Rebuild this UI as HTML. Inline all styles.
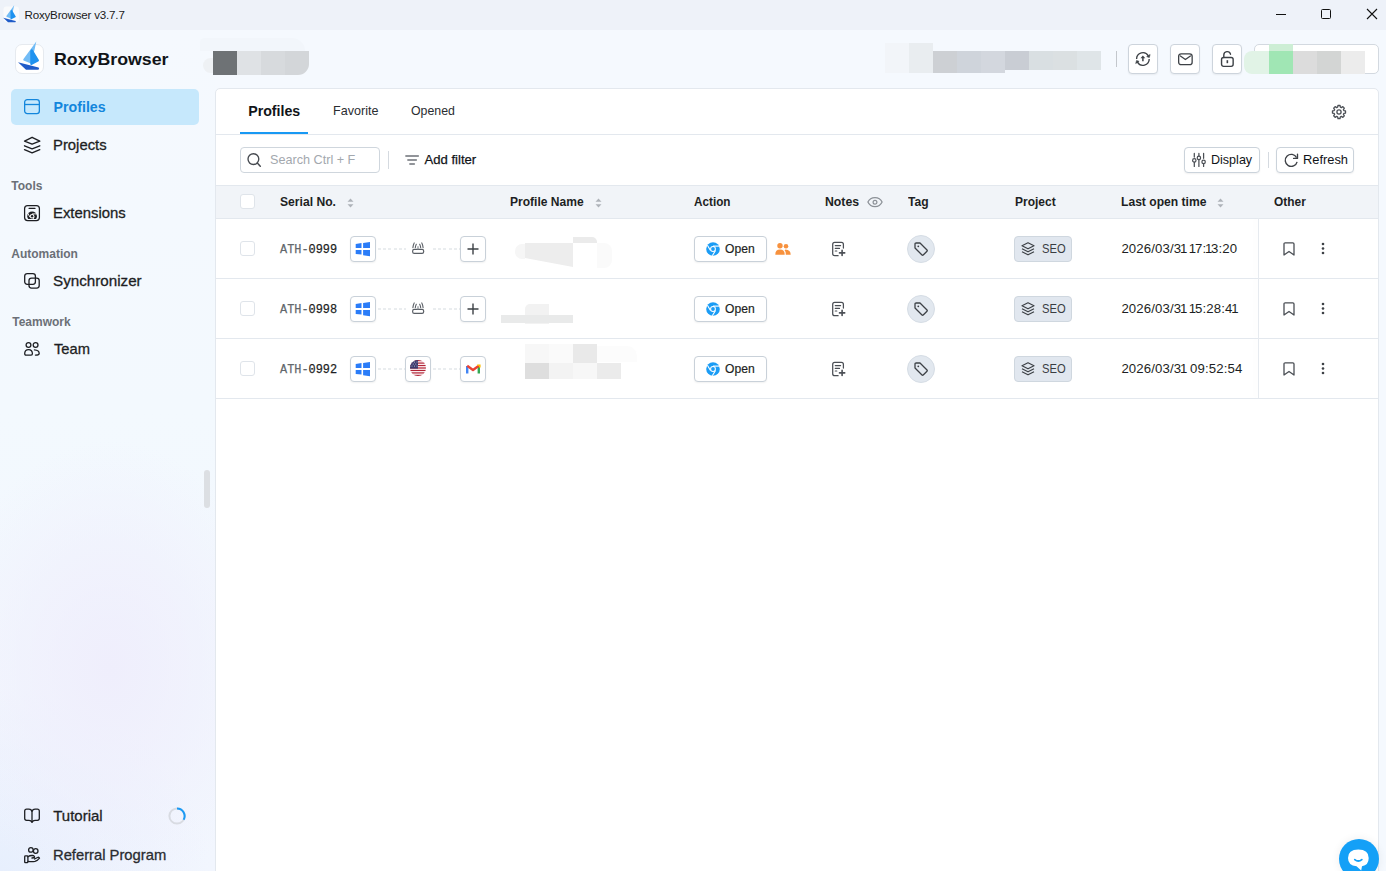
<!DOCTYPE html>
<html><head><meta charset="utf-8">
<style>
*{margin:0;padding:0;box-sizing:border-box}
html,body{width:1386px;height:871px;overflow:hidden;background:#f5f9fe;font-family:"Liberation Sans",sans-serif;color:#1d1f23}
.a{position:absolute}
.t{position:absolute;white-space:pre;line-height:1}
svg{position:absolute;overflow:visible}
.btn{position:absolute;background:#fff;border:1px solid #cbd3db;border-radius:4px;box-shadow:0 1px 2px rgba(0,0,0,.06)}
.cb{position:absolute;width:15px;height:15px;border:1px solid #dfe4ea;border-radius:3px;background:#fff}
</style></head><body>
<div class="a" style="left:0px;top:0px;width:1386px;height:30px;background:#eef2f9"></div>
<svg style="left:3px;top:5px" width="17" height="18" viewBox="0 0 17 18"><rect x="0.5" y="1.5" width="15.5" height="15.5" rx="3" fill="#f9fafc"/><g transform="translate(-1.6,-0.6) scale(0.6)"><path d="M21.3 1.5 L8.3 19.2 Q7.8 20.3 9.2 20.8 L16 23.5 L19.6 9.5 Z" fill="#72bcf6"/><path d="M15.2 11 Q16.3 8.2 18 10.2 L23.9 20.1 Q24.3 21.1 23.2 21.6 L16.6 24.9 Q15.5 25.3 15.3 24 Z" fill="#1f92ef"/><path d="M3 22.3 L23.6 27.6 Q25 29.7 22.7 29.7 L11 29.7 Z" fill="#1f5bc8"/></g></svg>
<div class="t" style="left:24.5px;top:8px;font:normal 11.6px 'Liberation Sans';color:#1a1a1a;letter-spacing:-0.2px">RoxyBrowser v3.7.7</div>
<div class="a" style="left:1276px;top:14px;width:10px;height:1px;background:#111"></div>
<div class="a" style="left:1321px;top:9px;width:10px;height:10px;border:1px solid #111;border-radius:1.5px"></div>
<svg style="left:1367px;top:9px" width="10" height="10" viewBox="0 0 10 10"><path d="M0 0 L10 10 M10 0 L0 10" stroke="#111" stroke-width="1.1"/></svg>
<div class="a" style="left:0px;top:30px;width:215px;height:841px;background:radial-gradient(ellipse 170px 230px at 110px 640px,#efeefc 0%,rgba(239,238,252,0.6) 45%,rgba(239,238,252,0) 100%),radial-gradient(ellipse 210px 180px at 0px 841px,#e7effd 0%,rgba(231,239,253,0) 100%),linear-gradient(180deg,#f5f9fe 0%,#f3f9fe 45%,#f2f6fe 100%)"></div>
<div class="a" style="left:15px;top:44px;width:29px;height:30px;background:#fff;border:1px solid #e6eaef;border-radius:7px"></div>
<svg style="left:15px;top:40px" width="29" height="34" viewBox="0 0 29 34"><path d="M21.3 1.5 L8.3 19.2 Q7.8 20.3 9.2 20.8 L16 23.5 L19.6 9.5 Z" fill="#72bcf6"/><path d="M15.2 11 Q16.3 8.2 18 10.2 L23.9 20.1 Q24.3 21.1 23.2 21.6 L16.6 24.9 Q15.5 25.3 15.3 24 Z" fill="#1f92ef"/><path d="M3 22.3 L23.6 27.6 Q25 29.7 22.7 29.7 L11 29.7 Z" fill="#1f5bc8"/></svg>
<div class="t" style="left:53.7px;top:50px;font:bold 17px 'Liberation Sans';color:#111418;transform:scaleX(1.045);transform-origin:0 0">RoxyBrowser</div>
<div class="a" style="left:11px;top:89px;width:188px;height:36px;background:#c6e8fc;border-radius:5px"></div>
<svg style="left:24px;top:99px" width="16" height="16" viewBox="0 0 16 16"><rect x="0.65" y="0.65" width="14.7" height="13.9" rx="2.6" fill="none" stroke="#1386dc" stroke-width="1.3"/><path d="M0.65 5.5 H15.35" stroke="#1386dc" stroke-width="1.3"/></svg>
<div class="t" style="left:53.6px;top:99px;font:bold 14.2px 'Liberation Sans';color:#1386dc;">Profiles</div>
<svg style="left:23px;top:136px" width="18" height="18" viewBox="0 0 18 18"><path d="M9.1 1.3 L16.8 5.1 L9.1 8.1 L1.5 5.1 Z" fill="none" stroke="#1d1f23" stroke-width="1.35" stroke-linejoin="round"/><path d="M1.5 9.8 L9.1 12.9 L16.8 9.8 M1.5 13.7 L9.1 16.8 L16.8 13.7" fill="none" stroke="#1d1f23" stroke-width="1.35" stroke-linejoin="round" stroke-linecap="round"/></svg>
<div class="t" style="left:53.1px;top:136px;font:normal 15px 'Liberation Sans';color:#1d1f23;-webkit-text-stroke:0.3px currentColor;transform:scaleX(0.989);transform-origin:0 0">Projects</div>
<div class="t" style="left:11.3px;top:179px;font:bold 12px 'Liberation Sans';color:#6b7077;">Tools</div>
<svg style="left:24px;top:205px" width="17" height="17" viewBox="0 0 17 17"><defs><clipPath id="ec"><rect x="1" y="1" width="14" height="13"/></clipPath></defs><rect x="0.6" y="0.6" width="14.8" height="14.9" rx="3" fill="none" stroke="#1d1f23" stroke-width="1.25"/><path d="M5.1 3.4 H11" stroke="#1d1f23" stroke-width="1.2" stroke-linecap="round"/><g clip-path="url(#ec)"><circle cx="8.1" cy="11.2" r="4.8" fill="#1d1f23"/><circle cx="8.1" cy="11.2" r="2.3" fill="#fff"/><circle cx="8.1" cy="11.2" r="1.2" fill="#1d1f23"/><path d="M8.1 8.9 H13 M6.1 12.3 L3.6 8 M10.1 12.3 L7.6 16.5" stroke="#fff" stroke-width="0.9"/></g></svg>
<div class="t" style="left:53.0px;top:204px;font:normal 15px 'Liberation Sans';color:#1d1f23;-webkit-text-stroke:0.3px currentColor;transform:scaleX(0.992);transform-origin:0 0">Extensions</div>
<div class="t" style="left:11.3px;top:247px;font:bold 12px 'Liberation Sans';color:#6b7077;">Automation</div>
<svg style="left:24px;top:272px" width="17" height="18" viewBox="0 0 17 18"><rect x="0.7" y="1.6" width="10.7" height="10.7" rx="2.5" fill="none" stroke="#1d1f23" stroke-width="1.3"/><rect x="5" y="6.1" width="10.2" height="10" rx="2.5" fill="none" stroke="#1d1f23" stroke-width="1.3"/></svg>
<div class="t" style="left:53.0px;top:272px;font:normal 15px 'Liberation Sans';color:#1d1f23;-webkit-text-stroke:0.3px currentColor;transform:scaleX(1.013);transform-origin:0 0">Synchronizer</div>
<div class="t" style="left:12.2px;top:315px;font:bold 12px 'Liberation Sans';color:#6b7077;">Teamwork</div>
<svg style="left:24px;top:342px" width="16" height="15" viewBox="0 0 16 15"><circle cx="4.5" cy="3" r="2.4" fill="none" stroke="#1d1f23" stroke-width="1.3"/><circle cx="11.6" cy="3" r="2.4" fill="none" stroke="#1d1f23" stroke-width="1.3"/><path d="M0.7 11.8 Q0.7 7.7 4.6 7.7 Q8.4 7.7 8.4 11.8 Q8.4 13.1 7.1 13.1 H2 Q0.7 13.1 0.7 11.8 Z" fill="none" stroke="#1d1f23" stroke-width="1.3"/><path d="M10.4 7.9 Q15.2 8.2 15.2 11.4 Q15.2 13.1 11.4 13.1" fill="none" stroke="#1d1f23" stroke-width="1.3" stroke-linecap="round"/></svg>
<div class="t" style="left:53.5px;top:340px;font:normal 15px 'Liberation Sans';color:#1d1f23;-webkit-text-stroke:0.3px currentColor;transform:scaleX(0.98);transform-origin:0 0">Team</div>
<div class="a" style="left:204px;top:470px;width:6px;height:38px;background:#dcdfe3;border-radius:3px"></div>
<svg style="left:24px;top:808px" width="16" height="16" viewBox="0 0 16 16"><path d="M8 3.2 Q7.2 1.2 5 1.2 H2.6 Q0.7 1.2 0.7 3 V10.5 Q0.7 12.3 2.6 12.3 H5 Q7.2 12.3 8 14.2 Q8.8 12.3 11 12.3 H13.4 Q15.3 12.3 15.3 10.5 V3 Q15.3 1.2 13.4 1.2 H11 Q8.8 1.2 8 3.2 Z" fill="none" stroke="#1d1f23" stroke-width="1.3" stroke-linejoin="round"/><path d="M8 3.2 V14.2" stroke="#1d1f23" stroke-width="1.3" stroke-linecap="round"/></svg>
<div class="t" style="left:53.2px;top:807px;font:normal 15px 'Liberation Sans';color:#1d1f23;-webkit-text-stroke:0.3px currentColor">Tutorial</div>
<svg style="left:168px;top:807px" width="18" height="18" viewBox="0 0 18 18"><circle cx="9" cy="9" r="7.6" fill="none" stroke="#d8dbe2" stroke-width="2"/><path d="M9 1.4 A7.6 7.6 0 0 1 15.6 12.8" fill="none" stroke="#1a9af5" stroke-width="2"/></svg>
<svg style="left:24px;top:847px" width="17" height="17" viewBox="0 0 17 17"><circle cx="6.9" cy="2.9" r="2.3" fill="none" stroke="#1d1f23" stroke-width="1.3"/><circle cx="11.7" cy="4" r="2.3" fill="none" stroke="#1d1f23" stroke-width="1.3"/><rect x="0.7" y="8.9" width="3.2" height="6.8" rx="0.8" fill="none" stroke="#1d1f23" stroke-width="1.3"/><path d="M3.9 9.8 Q6 8.3 8.5 8.5 Q10.8 8.8 10.5 10.5 L8 11 M3.9 14.4 Q8 15 11 14.4 Q13.5 13.8 15.5 11.2 Q15 9.8 13.5 10.5 L10.5 12" fill="none" stroke="#1d1f23" stroke-width="1.3" stroke-linejoin="round" stroke-linecap="round"/></svg>
<div class="t" style="left:53.2px;top:846px;font:normal 15px 'Liberation Sans';color:#2a2c30;-webkit-text-stroke:0.3px currentColor;transform:scaleX(0.984);transform-origin:0 0">Referral Program</div>
<div class="a" style="left:203px;top:58px;width:14px;height:15px;background:#eef1f4;border-radius:8px 0 0 8px"></div>
<div class="a" style="left:200px;top:38px;width:105px;height:13px;background:#f2f6fb;border-radius:10px 30px 0 0"></div>
<div class="a" style="left:213px;top:51px;width:24px;height:24px;background:#6e7275"></div>
<div class="a" style="left:237px;top:51px;width:24px;height:24px;background:#dfe2e5"></div>
<div class="a" style="left:261px;top:51px;width:24px;height:24px;background:#d7dadd"></div>
<div class="a" style="left:285px;top:51px;width:24px;height:24px;background:#d3d6d9;border-radius:0 0 11px 0"></div>
<div class="a" style="left:885px;top:43px;width:24px;height:30px;background:#f2f5f9"></div>
<div class="a" style="left:909px;top:43px;width:24px;height:30px;background:#e9edf0"></div>
<div class="a" style="left:933px;top:51px;width:24px;height:22px;background:#cdd0d4"></div>
<div class="a" style="left:957px;top:51px;width:24px;height:22px;background:#cfd4db"></div>
<div class="a" style="left:981px;top:51px;width:24px;height:22px;background:#d3d7de"></div>
<div class="a" style="left:1005px;top:51px;width:24px;height:19px;background:#c9cdd4"></div>
<div class="a" style="left:1029px;top:51px;width:24px;height:19px;background:#d9dfe2"></div>
<div class="a" style="left:1053px;top:51px;width:24px;height:19px;background:#dbe0e2"></div>
<div class="a" style="left:1077px;top:51px;width:24px;height:19px;background:#dfe5e8"></div>
<div class="a" style="left:1116px;top:51px;width:1px;height:16px;background:#c3c7cc"></div>
<div class="btn" style="left:1128px;top:44px;width:30px;height:30px;border-color:#cdd4dc"></div>
<div class="btn" style="left:1170px;top:44px;width:30px;height:30px;border-color:#cdd4dc"></div>
<div class="btn" style="left:1212px;top:44px;width:30px;height:30px;border-color:#cdd4dc"></div>
<svg style="left:1135px;top:51px" width="16" height="16" viewBox="0 0 16 16"><path d="M1.6 8 A6.3 6.3 0 0 1 13.36 4.85 M14.2 8 A6.3 6.3 0 0 1 2.44 11.15" fill="none" stroke="#3d4146" stroke-width="1.35"/><path d="M14.3 6.6 L15.1 3.5 L11.7 5.6 Z M1.6 9.4 L0.7 12.5 L4.1 10.4 Z" fill="#3d4146" stroke="#3d4146" stroke-width="0.6" stroke-linejoin="round"/><path d="M7.9 4.6 L10.3 7.3 H5.5 Z" fill="#3d4146"/><path d="M7.9 7 V10.3" stroke="#3d4146" stroke-width="1.5"/></svg>
<svg style="left:1177px;top:52px" width="16" height="14" viewBox="0 0 16 14"><rect x="1.65" y="1.85" width="13.5" height="10.8" rx="2.5" fill="none" stroke="#3d4146" stroke-width="1.3"/><path d="M3.4 4 L8.4 7.5 L13.4 4" fill="none" stroke="#3d4146" stroke-width="1.3" stroke-linecap="round" stroke-linejoin="round"/></svg>
<svg style="left:1220px;top:50px" width="15" height="17" viewBox="0 0 15 17"><path d="M3.8 7.5 V5 A3.4 3.4 0 0 1 10.5 4.2" fill="none" stroke="#3d4146" stroke-width="1.4" stroke-linecap="round"/><rect x="1.55" y="7.55" width="11.6" height="8.8" rx="2" fill="none" stroke="#3d4146" stroke-width="1.4"/><path d="M7.35 10.2 V13.2" stroke="#3d4146" stroke-width="1.6"/></svg>
<div class="a" style="left:1254px;top:44px;width:125px;height:30px;background:#fff;border:1px solid #d3d9e0;border-radius:5px"></div>
<div class="a" style="left:1244px;top:51px;width:25px;height:23px;background:#e1f3e6;border-radius:8px 0 0 8px"></div>
<div class="a" style="left:1269px;top:44px;width:24px;height:7px;background:#cdeed5"></div>
<div class="a" style="left:1269px;top:51px;width:24px;height:23px;background:#a0e6b4"></div>
<div class="a" style="left:1293px;top:51px;width:24px;height:23px;background:#dcdcdc"></div>
<div class="a" style="left:1317px;top:51px;width:24px;height:23px;background:#d3d5d4"></div>
<div class="a" style="left:1341px;top:51px;width:24px;height:23px;background:#ececec"></div>
<div class="a" style="left:215px;top:88px;width:1164px;height:800px;background:#fff;border:1px solid #e3e8ee;border-radius:5px"></div>
<div class="t" style="left:248.2px;top:103px;font:bold 14.2px 'Liberation Sans';color:#111418;">Profiles</div>
<div class="t" style="left:333.0px;top:103px;font:normal 13px 'Liberation Sans';color:#2a2d31;transform:scaleX(0.967);transform-origin:0 0">Favorite</div>
<div class="t" style="left:410.6px;top:103px;font:normal 13px 'Liberation Sans';color:#2a2d31;transform:scaleX(0.948);transform-origin:0 0">Opened</div>
<div class="a" style="left:240px;top:132px;width:68px;height:2px;background:#1899f4"></div>
<div class="a" style="left:216px;top:134px;width:1162px;height:1px;background:#e3e8ee"></div>
<svg style="left:1331px;top:104px" width="16" height="16" viewBox="0 0 16 16"><path d="M6.97 1.48 L9.03 1.48 L9.38 3.19 L10.42 3.63 L11.88 2.66 L13.34 4.12 L12.37 5.58 L12.81 6.62 L14.52 6.97 L14.52 9.03 L12.81 9.38 L12.37 10.42 L13.34 11.88 L11.88 13.34 L10.42 12.37 L9.38 12.81 L9.03 14.52 L6.97 14.52 L6.62 12.81 L5.58 12.37 L4.12 13.34 L2.66 11.88 L3.63 10.42 L3.19 9.38 L1.48 9.03 L1.48 6.97 L3.19 6.62 L3.63 5.58 L2.66 4.12 L4.12 2.66 L5.58 3.63 L6.62 3.19 Z" fill="none" stroke="#4b4f55" stroke-width="1.3" stroke-linejoin="round"/><circle cx="8" cy="8" r="2.1" fill="none" stroke="#4b4f55" stroke-width="1.3"/></svg>
<div class="btn" style="left:240px;top:147px;width:140px;height:26px;border-color:#cfd6dd;box-shadow:none"></div>
<svg style="left:247px;top:154px" width="14" height="14" viewBox="0 0 14 14"><circle cx="6.4" cy="5.1" r="5.4" fill="none" stroke="#464a50" stroke-width="1.35"/><path d="M10.3 9.1 L13.3 12.2" stroke="#464a50" stroke-width="1.5" stroke-linecap="round"/></svg>
<div class="t" style="left:269.6px;top:152px;font:normal 13px 'Liberation Sans';color:#a3a8ae;transform:scaleX(0.972);transform-origin:0 0">Search Ctrl + F</div>
<div class="a" style="left:388px;top:151px;width:1px;height:18px;background:#d5dae0"></div>
<svg style="left:405px;top:154px" width="14" height="11" viewBox="0 0 14 11"><path d="M0.9 2 H13.3 M2.9 6 H11.3 M4.9 10 H9.3" stroke="#6d7278" stroke-width="1.6" stroke-linecap="round"/></svg>
<div class="t" style="left:424.5px;top:152px;font:normal 13.1px 'Liberation Sans';color:#111418;-webkit-text-stroke:0.25px #111418">Add filter</div>
<div class="btn" style="left:1184px;top:147px;width:76px;height:26px"></div>
<svg style="left:1192px;top:153px" width="14" height="14" viewBox="0 0 14 14"><path d="M2.3 0.4 V4 M2.3 9.3 V13.4 M6.9 0.4 V3.1 M6.9 6.8 V13.4 M11.6 0.4 V5.3 M11.6 10.7 V13.4" stroke="#4b4f55" stroke-width="1.25" stroke-linecap="round"/><circle cx="2.3" cy="7.4" r="1.7" fill="none" stroke="#4b4f55" stroke-width="1.2"/><circle cx="6.9" cy="4.9" r="1.7" fill="none" stroke="#4b4f55" stroke-width="1.2"/><circle cx="11.6" cy="8.9" r="1.7" fill="none" stroke="#4b4f55" stroke-width="1.2"/></svg>
<div class="t" style="left:1210.8px;top:152px;font:normal 13px 'Liberation Sans';color:#111418;transform:scaleX(0.965);transform-origin:0 0">Display</div>
<div class="a" style="left:1268px;top:152px;width:1px;height:16px;background:#d5dae0"></div>
<div class="btn" style="left:1276px;top:147px;width:78px;height:26px"></div>
<svg style="left:1284px;top:153px" width="15" height="14" viewBox="0 0 15 14"><path d="M12.6 4.6 A6 6 0 1 0 13.1 8.8" fill="none" stroke="#3d4146" stroke-width="1.35"/><path d="M13.5 1.2 V5.4 H9.6" fill="none" stroke="#3d4146" stroke-width="1.35" stroke-linecap="round" stroke-linejoin="round"/></svg>
<div class="t" style="left:1303.2px;top:152px;font:normal 13px 'Liberation Sans';color:#111418;transform:scaleX(0.989);transform-origin:0 0">Refresh</div>
<div class="a" style="left:216px;top:185px;width:1162px;height:34px;background:#f1f4f8;border-top:1px solid #e3e8ee;border-bottom:1px solid #e3e8ee"></div>
<div class="cb" style="left:240px;top:194px"></div>
<div class="t" style="left:280.4px;top:195px;font:bold 12.5px 'Liberation Sans';color:#1d1f23;transform:scaleX(0.97);transform-origin:0 0">Serial No.</div>
<svg style="left:346.9px;top:198px" width="7" height="10" viewBox="0 0 7 10"><path d="M3.5 0.5 L6.5 3.8 H0.5 Z M3.5 9.5 L6.5 6.2 H0.5 Z" fill="#aeb3b9"/></svg>
<div class="t" style="left:510.3px;top:195px;font:bold 12.5px 'Liberation Sans';color:#1d1f23;transform:scaleX(0.963);transform-origin:0 0">Profile Name</div>
<svg style="left:594.9px;top:198px" width="7" height="10" viewBox="0 0 7 10"><path d="M3.5 0.5 L6.5 3.8 H0.5 Z M3.5 9.5 L6.5 6.2 H0.5 Z" fill="#aeb3b9"/></svg>
<div class="t" style="left:694.1px;top:195px;font:bold 12.5px 'Liberation Sans';color:#1d1f23;transform:scaleX(0.938);transform-origin:0 0">Action</div>
<div class="t" style="left:825.4px;top:195px;font:bold 12.5px 'Liberation Sans';color:#1d1f23;transform:scaleX(0.982);transform-origin:0 0">Notes</div>
<svg style="left:867px;top:196.6px" width="16" height="11" viewBox="0 0 16 11"><path d="M0.9 5.1 C2.5 1.6 5 0.6 8 0.6 C11 0.6 13.5 1.6 15.1 5.1 C13.5 8.6 11 9.7 8 9.7 C5 9.7 2.5 8.6 0.9 5.1 Z" fill="none" stroke="#8b9096" stroke-width="1.2"/><circle cx="8" cy="5.2" r="1.9" fill="none" stroke="#8b9096" stroke-width="1.2"/></svg>
<div class="t" style="left:907.9px;top:195px;font:bold 12.5px 'Liberation Sans';color:#1d1f23;transform:scaleX(0.967);transform-origin:0 0">Tag</div>
<div class="t" style="left:1014.5px;top:195px;font:bold 12.5px 'Liberation Sans';color:#1d1f23;transform:scaleX(0.96);transform-origin:0 0">Project</div>
<div class="t" style="left:1121.3px;top:195px;font:bold 12.5px 'Liberation Sans';color:#1d1f23;transform:scaleX(0.969);transform-origin:0 0">Last open time</div>
<svg style="left:1216.9px;top:198px" width="7" height="10" viewBox="0 0 7 10"><path d="M3.5 0.5 L6.5 3.8 H0.5 Z M3.5 9.5 L6.5 6.2 H0.5 Z" fill="#aeb3b9"/></svg>
<div class="t" style="left:1274.3px;top:195px;font:bold 12.5px 'Liberation Sans';color:#1d1f23;transform:scaleX(0.953);transform-origin:0 0">Other</div>
<div class="a" style="left:216px;top:278px;width:1162px;height:1px;background:#e3e8ee"></div>
<div class="cb" style="left:240px;top:241px"></div>
<div class="t" style="left:280.2px;top:242px;font:normal 13.6px 'Liberation Mono';color:#1d1f23;transform:scaleX(0.875);transform-origin:0 0;-webkit-text-stroke:0.25px currentColor"><span style="color:#62676c">ATH-</span>0999</div>
<div class="btn" style="left:350px;top:236px;width:26px;height:26px;border-color:#c9d1d9"></div>
<svg style="left:355px;top:241px" width="16" height="16" viewBox="0 0 16 16"><path d="M0.7 3 L6.5 2.1 V6.9 H0.7 Z M8.1 1.9 L15 1 V6.9 H8.1 Z M0.7 9 H6.5 V13.6 L0.7 12.9 Z M8.1 9 H15 V15.3 L8.1 14.2 Z" fill="#2a7cf8"/></svg>
<div class="a" style="left:378px;top:248px;width:28px;height:2px;background:repeating-linear-gradient(90deg,#dce1e5 0 3px,transparent 3px 5.2px);transform:scaleY(0.6)"></div>
<div class="a" style="left:433px;top:248px;width:27px;height:2px;background:repeating-linear-gradient(90deg,#dce1e5 0 3px,transparent 3px 5.2px);transform:scaleY(0.6)"></div>
<svg style="left:412px;top:242px" width="12" height="12" viewBox="0 0 12 12"><rect x="0.65" y="7.4" width="11" height="4" rx="1.6" fill="none" stroke="#5a5f66" stroke-width="1.2"/><path d="M6 7.4 V4.2" stroke="#8a8f96" stroke-width="1.2"/><path d="M0.9 5.6 Q1.1 2.9 2.2 0.9 M3.3 5.6 Q3.5 3.7 4.3 2.3 M7.7 2.3 Q8.5 3.7 8.7 5.6 M9.8 0.9 Q10.9 2.9 11.1 5.6" fill="none" stroke="#5a5f66" stroke-width="1.1" stroke-linecap="round"/></svg>
<div class="btn" style="left:460px;top:236px;width:26px;height:26px;border-color:#c9d1d9"></div>
<svg style="left:467px;top:243px" width="12" height="12" viewBox="0 0 12 12"><path d="M6 0.5 V11.5 M0.5 6 H11.5" stroke="#3d4146" stroke-width="1.4"/></svg>
<div class="btn" style="left:694px;top:236px;width:73px;height:26px;border-color:#c9d1d9"></div>
<svg style="left:706px;top:242px" width="14" height="14" viewBox="0 0 14 14"><circle cx="7" cy="7" r="6.8" fill="#1a9cf5"/><circle cx="7" cy="7" r="2.9" fill="#fff"/><circle cx="7" cy="7" r="1.9" fill="#1a9cf5"/><path d="M7 4.1 H13.2" stroke="#fff" stroke-width="1.1"/><path d="M4.5 8.5 L1.4 3.2" stroke="#fff" stroke-width="1.1"/><path d="M9.5 8.5 L6.3 13.8" stroke="#fff" stroke-width="1.1"/></svg>
<div class="t" style="left:725.3px;top:241px;font:normal 13px 'Liberation Sans';color:#1d1f23;transform:scaleX(0.931);transform-origin:0 0;-webkit-text-stroke:0.2px #1d1f23">Open</div>
<svg style="left:775px;top:243px" width="16" height="12" viewBox="0 0 16 12"><circle cx="5" cy="2.8" r="2.7" fill="#f7913d"/><circle cx="11" cy="3.2" r="2.3" fill="#f7913d"/><path d="M0.3 11.7 Q0.3 6.6 5 6.6 Q9.7 6.6 9.7 11.7 Z" fill="#f7913d"/><path d="M10.5 6.6 Q15.7 6.8 15.7 11.7 H10.8 Q11 8.5 9.6 7.2 Z" fill="#f7913d"/></svg>
<svg style="left:832px;top:241px" width="14" height="15" viewBox="0 0 14 15"><path d="M11.4 7.1 V3.4 Q11.4 1.4 9.4 1.4 H2.7 Q0.7 1.4 0.7 3.4 V12.7 Q0.7 14.7 2.7 14.7 H6.1" fill="none" stroke="#4b4f55" stroke-width="1.25" stroke-linecap="round"/><path d="M3.3 4.6 H8.6 M3.3 7.4 H7.5 M3.3 10 H4.8" stroke="#4b4f55" stroke-width="1.2" stroke-linecap="round"/><path d="M10.1 9.3 V14.5 M7.5 11.9 H12.7" stroke="#4b4f55" stroke-width="1.6" stroke-linecap="round"/></svg>
<div class="a" style="left:907px;top:235px;width:28px;height:28px;background:#e2e8ef;border:1px solid #d6dde5;border-radius:50%"></div>
<svg style="left:914px;top:242px" width="14" height="14" viewBox="0 0 14 14"><path d="M1 2.2 Q1 1 2.2 1 H6 L13 8 Q13.6 8.6 13 9.2 L9.2 13 Q8.6 13.6 8 13 L1 6 Z" fill="none" stroke="#3d4146" stroke-width="1.3" stroke-linejoin="round"/><circle cx="4.3" cy="4.3" r="0.9" fill="#3d4146"/></svg>
<div class="a" style="left:1014px;top:236px;width:58px;height:26px;background:#e1e7ef;border:1px solid #cfd7df;border-radius:4px"></div>
<svg style="left:1021px;top:242px" width="14" height="14" viewBox="0 0 14 14"><path d="M7 0.8 L13 3.8 L7 6.8 L1 3.8 Z" fill="none" stroke="#3d4146" stroke-width="1.2" stroke-linejoin="round"/><path d="M1 6.8 L7 9.8 L13 6.8 M1 9.8 L7 12.8 L13 9.8" fill="none" stroke="#3d4146" stroke-width="1.2" stroke-linejoin="round"/></svg>
<div class="t" style="left:1041.6px;top:241px;font:normal 13px 'Liberation Sans';color:#3a3d42;transform:scaleX(0.86);transform-origin:0 0">SEO</div>
<div class="t" style="left:1121.4px;top:241px;font:normal 13.2px 'Liberation Sans';color:#1d1f23;letter-spacing:0.14px">2026/03/3<span style="margin:0 -1.3px">1</span> <span style="margin:0 -1.3px">1</span>7:<span style="margin:0 -1.3px">1</span>3:20</div>
<div class="a" style="left:1258px;top:218px;width:1px;height:60px;background:#e6eaef;box-shadow:-3px 0 4px rgba(0,0,0,.04)"></div>
<svg style="left:1283px;top:242px" width="12" height="14" viewBox="0 0 12 14"><path d="M1 2 Q1 0.8 2.2 0.8 H9.8 Q11 0.8 11 2 V13 L6 9.5 L1 13 Z" fill="none" stroke="#4b4f55" stroke-width="1.3" stroke-linejoin="round"/></svg>
<svg style="left:1321px;top:242px" width="4" height="13" viewBox="0 0 4 13"><circle cx="2" cy="2" r="1.3" fill="#3d4146"/><circle cx="2" cy="6.5" r="1.3" fill="#3d4146"/><circle cx="2" cy="11" r="1.3" fill="#3d4146"/></svg>
<div class="a" style="left:216px;top:338px;width:1162px;height:1px;background:#e3e8ee"></div>
<div class="cb" style="left:240px;top:301px"></div>
<div class="t" style="left:280.2px;top:302px;font:normal 13.6px 'Liberation Mono';color:#1d1f23;transform:scaleX(0.875);transform-origin:0 0;-webkit-text-stroke:0.25px currentColor"><span style="color:#62676c">ATH-</span>0998</div>
<div class="btn" style="left:350px;top:296px;width:26px;height:26px;border-color:#c9d1d9"></div>
<svg style="left:355px;top:301px" width="16" height="16" viewBox="0 0 16 16"><path d="M0.7 3 L6.5 2.1 V6.9 H0.7 Z M8.1 1.9 L15 1 V6.9 H8.1 Z M0.7 9 H6.5 V13.6 L0.7 12.9 Z M8.1 9 H15 V15.3 L8.1 14.2 Z" fill="#2a7cf8"/></svg>
<div class="a" style="left:378px;top:308px;width:28px;height:2px;background:repeating-linear-gradient(90deg,#dce1e5 0 3px,transparent 3px 5.2px);transform:scaleY(0.6)"></div>
<div class="a" style="left:433px;top:308px;width:27px;height:2px;background:repeating-linear-gradient(90deg,#dce1e5 0 3px,transparent 3px 5.2px);transform:scaleY(0.6)"></div>
<svg style="left:412px;top:302px" width="12" height="12" viewBox="0 0 12 12"><rect x="0.65" y="7.4" width="11" height="4" rx="1.6" fill="none" stroke="#5a5f66" stroke-width="1.2"/><path d="M6 7.4 V4.2" stroke="#8a8f96" stroke-width="1.2"/><path d="M0.9 5.6 Q1.1 2.9 2.2 0.9 M3.3 5.6 Q3.5 3.7 4.3 2.3 M7.7 2.3 Q8.5 3.7 8.7 5.6 M9.8 0.9 Q10.9 2.9 11.1 5.6" fill="none" stroke="#5a5f66" stroke-width="1.1" stroke-linecap="round"/></svg>
<div class="btn" style="left:460px;top:296px;width:26px;height:26px;border-color:#c9d1d9"></div>
<svg style="left:467px;top:303px" width="12" height="12" viewBox="0 0 12 12"><path d="M6 0.5 V11.5 M0.5 6 H11.5" stroke="#3d4146" stroke-width="1.4"/></svg>
<div class="btn" style="left:694px;top:296px;width:73px;height:26px;border-color:#c9d1d9"></div>
<svg style="left:706px;top:302px" width="14" height="14" viewBox="0 0 14 14"><circle cx="7" cy="7" r="6.8" fill="#1a9cf5"/><circle cx="7" cy="7" r="2.9" fill="#fff"/><circle cx="7" cy="7" r="1.9" fill="#1a9cf5"/><path d="M7 4.1 H13.2" stroke="#fff" stroke-width="1.1"/><path d="M4.5 8.5 L1.4 3.2" stroke="#fff" stroke-width="1.1"/><path d="M9.5 8.5 L6.3 13.8" stroke="#fff" stroke-width="1.1"/></svg>
<div class="t" style="left:725.3px;top:301px;font:normal 13px 'Liberation Sans';color:#1d1f23;transform:scaleX(0.931);transform-origin:0 0;-webkit-text-stroke:0.2px #1d1f23">Open</div>
<svg style="left:832px;top:301px" width="14" height="15" viewBox="0 0 14 15"><path d="M11.4 7.1 V3.4 Q11.4 1.4 9.4 1.4 H2.7 Q0.7 1.4 0.7 3.4 V12.7 Q0.7 14.7 2.7 14.7 H6.1" fill="none" stroke="#4b4f55" stroke-width="1.25" stroke-linecap="round"/><path d="M3.3 4.6 H8.6 M3.3 7.4 H7.5 M3.3 10 H4.8" stroke="#4b4f55" stroke-width="1.2" stroke-linecap="round"/><path d="M10.1 9.3 V14.5 M7.5 11.9 H12.7" stroke="#4b4f55" stroke-width="1.6" stroke-linecap="round"/></svg>
<div class="a" style="left:907px;top:295px;width:28px;height:28px;background:#e2e8ef;border:1px solid #d6dde5;border-radius:50%"></div>
<svg style="left:914px;top:302px" width="14" height="14" viewBox="0 0 14 14"><path d="M1 2.2 Q1 1 2.2 1 H6 L13 8 Q13.6 8.6 13 9.2 L9.2 13 Q8.6 13.6 8 13 L1 6 Z" fill="none" stroke="#3d4146" stroke-width="1.3" stroke-linejoin="round"/><circle cx="4.3" cy="4.3" r="0.9" fill="#3d4146"/></svg>
<div class="a" style="left:1014px;top:296px;width:58px;height:26px;background:#e1e7ef;border:1px solid #cfd7df;border-radius:4px"></div>
<svg style="left:1021px;top:302px" width="14" height="14" viewBox="0 0 14 14"><path d="M7 0.8 L13 3.8 L7 6.8 L1 3.8 Z" fill="none" stroke="#3d4146" stroke-width="1.2" stroke-linejoin="round"/><path d="M1 6.8 L7 9.8 L13 6.8 M1 9.8 L7 12.8 L13 9.8" fill="none" stroke="#3d4146" stroke-width="1.2" stroke-linejoin="round"/></svg>
<div class="t" style="left:1041.6px;top:301px;font:normal 13px 'Liberation Sans';color:#3a3d42;transform:scaleX(0.86);transform-origin:0 0">SEO</div>
<div class="t" style="left:1121.4px;top:301px;font:normal 13.2px 'Liberation Sans';color:#1d1f23;letter-spacing:0.14px">2026/03/3<span style="margin:0 -1.3px">1</span> <span style="margin:0 -1.3px">1</span>5:28:4<span style="margin:0 -1.3px">1</span></div>
<div class="a" style="left:1258px;top:278px;width:1px;height:60px;background:#e6eaef;box-shadow:-3px 0 4px rgba(0,0,0,.04)"></div>
<svg style="left:1283px;top:302px" width="12" height="14" viewBox="0 0 12 14"><path d="M1 2 Q1 0.8 2.2 0.8 H9.8 Q11 0.8 11 2 V13 L6 9.5 L1 13 Z" fill="none" stroke="#4b4f55" stroke-width="1.3" stroke-linejoin="round"/></svg>
<svg style="left:1321px;top:302px" width="4" height="13" viewBox="0 0 4 13"><circle cx="2" cy="2" r="1.3" fill="#3d4146"/><circle cx="2" cy="6.5" r="1.3" fill="#3d4146"/><circle cx="2" cy="11" r="1.3" fill="#3d4146"/></svg>
<div class="a" style="left:216px;top:398px;width:1162px;height:1px;background:#e3e8ee"></div>
<div class="cb" style="left:240px;top:361px"></div>
<div class="t" style="left:280.2px;top:362px;font:normal 13.6px 'Liberation Mono';color:#1d1f23;transform:scaleX(0.875);transform-origin:0 0;-webkit-text-stroke:0.25px currentColor"><span style="color:#62676c">ATH-</span>0992</div>
<div class="btn" style="left:350px;top:356px;width:26px;height:26px;border-color:#c9d1d9"></div>
<svg style="left:355px;top:361px" width="16" height="16" viewBox="0 0 16 16"><path d="M0.7 3 L6.5 2.1 V6.9 H0.7 Z M8.1 1.9 L15 1 V6.9 H8.1 Z M0.7 9 H6.5 V13.6 L0.7 12.9 Z M8.1 9 H15 V15.3 L8.1 14.2 Z" fill="#2a7cf8"/></svg>
<div class="a" style="left:378px;top:368px;width:28px;height:2px;background:repeating-linear-gradient(90deg,#dce1e5 0 3px,transparent 3px 5.2px);transform:scaleY(0.6)"></div>
<div class="a" style="left:433px;top:368px;width:27px;height:2px;background:repeating-linear-gradient(90deg,#dce1e5 0 3px,transparent 3px 5.2px);transform:scaleY(0.6)"></div>
<div class="btn" style="left:405px;top:356px;width:26px;height:26px;border-color:#c9d1d9"></div>
<svg style="left:410px;top:360px" width="16" height="16" viewBox="0 0 16 16"><defs><clipPath id="fc"><circle cx="8" cy="8" r="8"/></clipPath></defs><g clip-path="url(#fc)"><rect width="16" height="16" fill="#fff"/><rect x="0" y="0.00" width="16" height="1.23" fill="#b22234"/><rect x="0" y="2.46" width="16" height="1.23" fill="#b22234"/><rect x="0" y="4.92" width="16" height="1.23" fill="#b22234"/><rect x="0" y="7.38" width="16" height="1.23" fill="#b22234"/><rect x="0" y="9.85" width="16" height="1.23" fill="#b22234"/><rect x="0" y="12.31" width="16" height="1.23" fill="#b22234"/><rect x="0" y="14.77" width="16" height="1.23" fill="#b22234"/><rect x="0" y="0" width="8" height="8.6" fill="#3c3b6e"/><g fill="#fff" opacity=".8"><circle cx="2" cy="2" r=".5"/><circle cx="4.5" cy="2" r=".5"/><circle cx="7" cy="2" r=".5"/><circle cx="3.2" cy="4" r=".5"/><circle cx="5.8" cy="4" r=".5"/><circle cx="2" cy="6" r=".5"/><circle cx="4.5" cy="6" r=".5"/><circle cx="7" cy="6" r=".5"/></g></g></svg>
<div class="btn" style="left:460px;top:356px;width:26px;height:26px;border-color:#c9d1d9"></div>
<svg style="left:466px;top:364px" width="14" height="10" viewBox="0 0 14 10"><path d="M1.2 9.5 V2" stroke="#4285f4" stroke-width="2.4"/><path d="M12.8 9.5 V2" stroke="#34a853" stroke-width="2.4"/><path d="M1.2 1.8 L7 6 L12.8 1.8" fill="none" stroke="#ea4335" stroke-width="2.4" stroke-linejoin="round"/><path d="M11.2 1.2 L13.8 1.2 L13.8 3.5" fill="none" stroke="#fbbc04" stroke-width="1.6"/></svg>
<div class="btn" style="left:694px;top:356px;width:73px;height:26px;border-color:#c9d1d9"></div>
<svg style="left:706px;top:362px" width="14" height="14" viewBox="0 0 14 14"><circle cx="7" cy="7" r="6.8" fill="#1a9cf5"/><circle cx="7" cy="7" r="2.9" fill="#fff"/><circle cx="7" cy="7" r="1.9" fill="#1a9cf5"/><path d="M7 4.1 H13.2" stroke="#fff" stroke-width="1.1"/><path d="M4.5 8.5 L1.4 3.2" stroke="#fff" stroke-width="1.1"/><path d="M9.5 8.5 L6.3 13.8" stroke="#fff" stroke-width="1.1"/></svg>
<div class="t" style="left:725.3px;top:361px;font:normal 13px 'Liberation Sans';color:#1d1f23;transform:scaleX(0.931);transform-origin:0 0;-webkit-text-stroke:0.2px #1d1f23">Open</div>
<svg style="left:832px;top:361px" width="14" height="15" viewBox="0 0 14 15"><path d="M11.4 7.1 V3.4 Q11.4 1.4 9.4 1.4 H2.7 Q0.7 1.4 0.7 3.4 V12.7 Q0.7 14.7 2.7 14.7 H6.1" fill="none" stroke="#4b4f55" stroke-width="1.25" stroke-linecap="round"/><path d="M3.3 4.6 H8.6 M3.3 7.4 H7.5 M3.3 10 H4.8" stroke="#4b4f55" stroke-width="1.2" stroke-linecap="round"/><path d="M10.1 9.3 V14.5 M7.5 11.9 H12.7" stroke="#4b4f55" stroke-width="1.6" stroke-linecap="round"/></svg>
<div class="a" style="left:907px;top:355px;width:28px;height:28px;background:#e2e8ef;border:1px solid #d6dde5;border-radius:50%"></div>
<svg style="left:914px;top:362px" width="14" height="14" viewBox="0 0 14 14"><path d="M1 2.2 Q1 1 2.2 1 H6 L13 8 Q13.6 8.6 13 9.2 L9.2 13 Q8.6 13.6 8 13 L1 6 Z" fill="none" stroke="#3d4146" stroke-width="1.3" stroke-linejoin="round"/><circle cx="4.3" cy="4.3" r="0.9" fill="#3d4146"/></svg>
<div class="a" style="left:1014px;top:356px;width:58px;height:26px;background:#e1e7ef;border:1px solid #cfd7df;border-radius:4px"></div>
<svg style="left:1021px;top:362px" width="14" height="14" viewBox="0 0 14 14"><path d="M7 0.8 L13 3.8 L7 6.8 L1 3.8 Z" fill="none" stroke="#3d4146" stroke-width="1.2" stroke-linejoin="round"/><path d="M1 6.8 L7 9.8 L13 6.8 M1 9.8 L7 12.8 L13 9.8" fill="none" stroke="#3d4146" stroke-width="1.2" stroke-linejoin="round"/></svg>
<div class="t" style="left:1041.6px;top:361px;font:normal 13px 'Liberation Sans';color:#3a3d42;transform:scaleX(0.86);transform-origin:0 0">SEO</div>
<div class="t" style="left:1121.4px;top:361px;font:normal 13.2px 'Liberation Sans';color:#1d1f23;letter-spacing:0.14px">2026/03/3<span style="margin:0 -1.3px">1</span> 09:52:54</div>
<div class="a" style="left:1258px;top:338px;width:1px;height:60px;background:#e6eaef;box-shadow:-3px 0 4px rgba(0,0,0,.04)"></div>
<svg style="left:1283px;top:362px" width="12" height="14" viewBox="0 0 12 14"><path d="M1 2 Q1 0.8 2.2 0.8 H9.8 Q11 0.8 11 2 V13 L6 9.5 L1 13 Z" fill="none" stroke="#4b4f55" stroke-width="1.3" stroke-linejoin="round"/></svg>
<svg style="left:1321px;top:362px" width="4" height="13" viewBox="0 0 4 13"><circle cx="2" cy="2" r="1.3" fill="#3d4146"/><circle cx="2" cy="6.5" r="1.3" fill="#3d4146"/><circle cx="2" cy="11" r="1.3" fill="#3d4146"/></svg>
<div class="a" style="left:515px;top:244px;width:10px;height:15px;background:#f6f6f6;border-radius:7px 0 0 7px"></div>
<div class="a" style="left:525px;top:243px;width:48px;height:24px;background:#ededed;clip-path:polygon(0 0,100% 0,100% 100%,0 62%)"></div>
<div class="a" style="left:573px;top:237px;width:24px;height:6px;background:#ebebeb;border-radius:0 5px 0 0"></div>
<div class="a" style="left:597px;top:243px;width:15px;height:25px;background:#fafafa;border-radius:0 8px 8px 0"></div>
<div class="a" style="left:525px;top:304px;width:24px;height:20px;background:#f2f2f2;border-radius:5px 0 0 0"></div>
<div class="a" style="left:501px;top:315px;width:72px;height:8px;background:#e9eaea"></div>
<div class="a" style="left:525px;top:344px;width:24px;height:19px;background:#f7f7f7"></div>
<div class="a" style="left:549px;top:344px;width:24px;height:19px;background:#fafafa"></div>
<div class="a" style="left:573px;top:344px;width:24px;height:19px;background:#e9e9e9"></div>
<div class="a" style="left:597px;top:346px;width:40px;height:16px;background:#fcfcfc;border-radius:0 10px 0 0"></div>
<div class="a" style="left:525px;top:363px;width:24px;height:16px;background:#dedede"></div>
<div class="a" style="left:549px;top:363px;width:24px;height:16px;background:#f3f3f3"></div>
<div class="a" style="left:573px;top:363px;width:24px;height:16px;background:#f7f7f7"></div>
<div class="a" style="left:597px;top:363px;width:24px;height:16px;background:#ebebeb"></div>
<div class="a" style="left:1339px;top:839px;width:40px;height:40px;background:#14a0f7;border-radius:50%;box-shadow:0 0 10px rgba(0,0,0,.07)"></div>
<svg style="left:1347px;top:849px" width="23" height="22" viewBox="0 0 23 22"><path d="M11.3 0.5 Q21.7 0.5 21.7 9 Q21.7 16.3 15 17.2 L14.2 21.5 L9.5 17.2 Q1 16.5 1 9 Q1 0.5 11.3 0.5 Z" fill="#fff"/><path d="M7.8 10.6 Q11.3 13.4 14.8 10.6" fill="none" stroke="#14a0f7" stroke-width="1.8" stroke-linecap="round"/></svg>
</body></html>
